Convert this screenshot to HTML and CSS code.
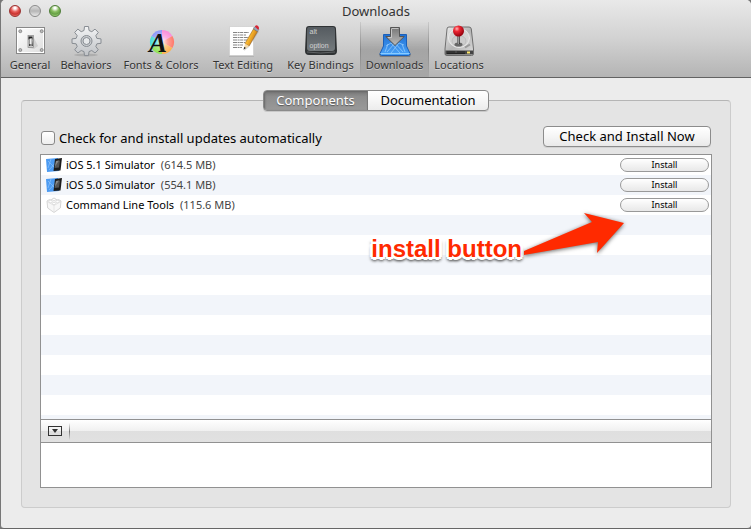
FILE: index.html
```html
<!DOCTYPE html>
<html lang="en">
<head>
<meta charset="utf-8">
<title>Downloads</title>
<link rel="stylesheet" href="styles.css">
</head>
<body>
<div class="window">
  <header class="titlebar">
    <div class="title-row">
      <div class="lights">
        <button class="light red" aria-label="Close"></button>
        <button class="light gray" aria-label="Minimize"></button>
        <button class="light green" aria-label="Zoom"></button>
      </div>
      <h1 class="title">Downloads</h1>
    </div>
    <nav class="toolbar">
      <button class="tool">
        <svg class="icon" viewBox="0 0 32 32">
          <defs>
            <linearGradient id="plate" x1="0" y1="0" x2="1" y2="1"><stop offset="0" stop-color="#fff"/><stop offset="1" stop-color="#ddd"/></linearGradient>
            <linearGradient id="lever" x1="0" x2="1"><stop offset="0" stop-color="#222"/><stop offset=".5" stop-color="#aaa"/><stop offset="1" stop-color="#333"/></linearGradient>
          </defs>
          <rect x="2.500" y="2.500" width="28" height="26" fill="url(#plate)" stroke="#888"/>
          <rect x="3.500" y="3.500" width="26" height="24" fill="none" stroke="#fff"/>
          <g fill="#bbb" stroke="#777" stroke-width=".7"><circle cx="6.300" cy="6.200" r="1.500"/><circle cx="27.700" cy="6.200" r="1.500"/><circle cx="6.300" cy="25" r="1.500"/><circle cx="27.700" cy="25" r="1.500"/></g>
          <path d="M19 11l5 10-4 3-5-1z" fill="#888" opacity=".25"/>
          <rect x="14" y="10.500" width="5.500" height="12" fill="#ccc" stroke="#888" stroke-width=".7"/>
          <path d="M14.500 11.500h4v3h-4z" fill="#222"/><path d="M15 13h3l1 8h-4z" fill="url(#lever)"/><path d="M15.500 14h2v5h-2z" fill="#eee"/>
        </svg>
        <span>General</span>
      </button>
      <button class="tool">
        <svg class="icon" viewBox="0 0 32 32">
          <defs><linearGradient id="metal" x1="0" y1="0" x2="0" y2="1"><stop offset="0" stop-color="#f3f4f5"/><stop offset="1" stop-color="#bfc2c6"/></linearGradient></defs>
          <ellipse cx="16" cy="30" rx="12" ry="1.500" fill="#777" opacity=".3"/>
          <g stroke="#888d93" stroke-width="1" stroke-linejoin="round">
            <path fill="url(#metal)" d="M14 5.500L14.500 1.500h4L19 5.500l2.800 1.200 3.200-2.600 3.300 3.300-2.500 3.300 1.100 2.700 4.100.5v4.400l-4.100.5-1.100 2.700 2.500 3.300-3.300 3.200-3.200-2.500-2.800 1.100-.5 4h-4l-.5-4-2.800-1.100-3.300 2.500-3.200-3.200 2.500-3.300-1.100-2.700-4.100-.5v-4.400l4.100-.5 1.100-2.700-2.500-3.300 3.200-3.300 3.300 2.600z"/>
            <circle cx="16.500" cy="16" r="5.500" fill="#c9ccd0"/><circle cx="16.500" cy="16" r="3.500" fill="#e6e8ea"/>
          </g>
        </svg>
        <span>Behaviors</span>
      </button>
      <button class="tool">
        <span class="icon"><svg viewBox="0 0 32 32">
          <defs><radialGradient id="shine"><stop offset="0" stop-color="#fff" stop-opacity=".9"/><stop offset=".5" stop-color="#fff" stop-opacity=".3"/><stop offset="1" stop-color="#fff" stop-opacity="0"/></radialGradient></defs>
          <g transform="translate(17 17)">
            <path d="M0 0L0-12A12 12 0 0 1 10.400-6z" fill="#fb8cda"/><path d="M0 0L10.400-6A12 12 0 0 1 10.400 6z" fill="#ff796a"/><path d="M0 0L10.400 6A12 12 0 0 1 0 12z" fill="#ffb04c"/><path d="M0 0L0 12A12 12 0 0 1-10.400 6z" fill="#8ee355"/><path d="M0 0L-10.400 6A12 12 0 0 1-10.400-6z" fill="#46dcd8"/><path d="M0 0L-10.400-6A12 12 0 0 1 0-12z" fill="#8b96f8"/>
            <circle r="12" fill="url(#shine)"/>
          </g>
        </svg><b class="letter" aria-hidden="true">A</b></span>
        <span>Fonts &amp; Colors</span>
      </button>
      <button class="tool">
        <svg class="icon" viewBox="0 0 32 32">
          <defs><linearGradient id="pencil" x1="0" y1="0" x2="1" y2=".6"><stop offset="0" stop-color="#ffe28a"/><stop offset=".5" stop-color="#f7b52c"/><stop offset="1" stop-color="#b86412"/></linearGradient></defs>
          <path d="M2 31h25" stroke="#999" stroke-width="1.500" opacity=".5"/>
          <path d="M2.500 1.500h24v29h-24z" fill="#fff" stroke="#ccc" stroke-width=".7"/>
          <path d="M6 7.500h16M6 10h13M6 12.500h15M6 15h14M6 17.500h12M6 20h10M6 22.500h9" stroke="#777" stroke-width=".9" stroke-dasharray="4 .6 2 .5 3 .7"/>
          <path d="M17 26l2-7 9-15 4 2.500-10 15.500z" fill="#777" opacity=".3"/>
          <path d="M18 18.500L26.500 4l4 2.500-8.500 14.500z" fill="url(#pencil)" stroke="#9b6115" stroke-width=".6"/>
          <path d="M18 18.500l4 2.500-5 3.500z" fill="#f5d9a5"/><path d="M17.300 21.800l1.600 1.300-2.400 1.600z" fill="#222"/>
          <path d="M26.500 4L28 1.600l4 2.500-1.500 2.400z" fill="#9ba8b8" stroke="#667" stroke-width=".5"/><path d="M27.800 1.600q2-2.600 4 .3.700 1.500-.7 2.800z" fill="#d92332"/>
        </svg>
        <span>Text Editing</span>
      </button>
      <button class="tool">
        <span class="icon" aria-hidden="true"><svg viewBox="0 0 32 32">
          <defs><linearGradient id="key" x1="0" y1="0" x2="0" y2="1"><stop offset="0" stop-color="#555b60"/><stop offset="1" stop-color="#747a7d"/></linearGradient></defs>
          <path d="M4 1h24q3 0 3 3l1 22q0 4-4 4H4q-4 0-4-4L1 4q0-3 3-3z" fill="#303335"/>
          <path d="M4 2h24q2 0 2 3v18q0 3-3 3H5q-3 0-3-3V5q0-3 2-3z" fill="url(#key)"/><path d="M2 27q13 2 28 0" fill="none" stroke="#75797b" stroke-width=".7"/>
        </svg><i class="key-alt">alt</i><i class="key-option">option</i></span>
        <span>Key Bindings</span>
      </button>
      <button class="tool selected" aria-pressed="true">
        <svg class="icon" viewBox="0 0 32 32">
          <defs>
            <linearGradient id="blue" x1="0" y1="0" x2="0" y2="1"><stop offset="0" stop-color="#1f70d4"/><stop offset="1" stop-color="#4ca5fa"/></linearGradient>
            <linearGradient id="arrowgray" x1="0" y1="0" x2="0" y2="1"><stop offset="0" stop-color="#777"/><stop offset="1" stop-color="#bbb"/></linearGradient>
          </defs>
          <path d="M0 29h32l-1 3H1z" fill="#555" opacity=".5"/>
          <path d="M4.500 9.500h23V21L31 28.500q0 2-1.500 2h-27Q1 30.500 1 28.500L4.500 21z" fill="url(#blue)" stroke="#1c60b9"/>
          <path d="M1.500 28.500h29" stroke="#8acbff"/>
          <path d="M8 27l7-8M24 27l-8-9M7 21l5-3 9 10M25 20l-5-2-8 10M6 27l3-8M26 27l-3-8" fill="none" stroke="#9bd0ff" stroke-width="1" opacity=".7"/>
          <path d="M11.500 2.500h9v9h4.800L16 20.500 6.700 11.500h4.800z" fill="url(#arrowgray)" stroke="#555"/><path d="M12.500 3.500h7M12.500 4v8.500H9" fill="none" stroke="#d3d3d3" stroke-width=".8"/>
        </svg>
        <span>Downloads</span>
      </button>
      <button class="tool">
        <svg class="icon" viewBox="0 0 32 32">
          <defs>
            <linearGradient id="drive" x1="0" y1="0" x2="1" y2="1"><stop offset="0" stop-color="#eee"/><stop offset=".5" stop-color="#b5b5b5"/><stop offset="1" stop-color="#ddd"/></linearGradient>
            <radialGradient id="ball" cx=".35" cy=".3" r=".7"><stop offset="0" stop-color="#ffb7b7"/><stop offset=".35" stop-color="#ef2733"/><stop offset="1" stop-color="#95000d"/></radialGradient>
          </defs>
          <path d="M6 2h20q2 0 2.300 2L30.500 24v5q0 1.500-2 1.500H4q-2 0-2-1.500v-5L4 4q0-2 2-2z" fill="url(#drive)" stroke="#555" stroke-width=".8"/>
          <ellipse cx="16" cy="13" rx="10.500" ry="9.500" fill="#d3d3d3" stroke="#f5f5f5" stroke-width=".7"/><ellipse cx="16" cy="16" rx="7" ry="5.500" fill="#ccc" stroke="#aaa" stroke-width=".5"/>
          <path d="M22 22.500l5-3" stroke="#999" stroke-width="2"/>
          <path d="M2.500 25.500h27.500v4h-27.500z" fill="#444"/><path d="M4 27h8M14 27h8M4 28.500h18" stroke="#222"/><path d="M24 27.500h3" stroke="#ffe86b" stroke-width="2"/>
          <ellipse cx="15.500" cy="19.500" rx="4" ry="2" fill="#666"/><path d="M15.500 9v10" stroke="#333" stroke-width="2.500"/><path d="M15.200 10v9" stroke="#eee" stroke-width=".8"/>
          <circle cx="15.500" cy="6" r="5.500" fill="url(#ball)"/>
        </svg>
        <span>Locations</span>
      </button>
    </nav>
  </header>

  <main class="content">
    <div class="tabs">
      <button class="tab active">Components</button><button class="tab">Documentation</button>
    </div>
    <section class="group">
      <div class="options">
        <label class="check"><input type="checkbox"><span>Check for and install updates automatically</span></label>
        <button class="push">Check and Install Now</button>
      </div>
      <div class="panel">
        <ul class="list">
          <li class="row">
            <svg class="row-icon" viewBox="0 0 16 16"><path d="M0 2l12-1 1 13-12 1z" fill="#4c9bf2"/><path d="M2 4l8 8M5 2l-3 9M3 13l8-9" stroke="#8cc3fb" stroke-width=".7" fill="none"/><path d="M9 2l7-1-1.500 12.500L7.500 14z" fill="#1d1d1d"/><path d="M10 4l4-.5-1 7-4.500.5z" fill="#555"/><path d="M10 4l3-.5-4 6z" fill="#888"/></svg>
            <span class="name">iOS 5.1 Simulator</span><span class="size">(614.5 MB)</span><button class="install">Install</button>
          </li>
          <li class="row">
            <svg class="row-icon" viewBox="0 0 16 16"><path d="M0 2l12-1 1 13-12 1z" fill="#4c9bf2"/><path d="M2 4l8 8M5 2l-3 9M3 13l8-9" stroke="#8cc3fb" stroke-width=".7" fill="none"/><path d="M9 2l7-1-1.500 12.500L7.500 14z" fill="#1d1d1d"/><path d="M10 4l4-.5-1 7-4.500.5z" fill="#555"/><path d="M10 4l3-.5-4 6z" fill="#888"/></svg>
            <span class="name">iOS 5.0 Simulator</span><span class="size">(554.1 MB)</span><button class="install">Install</button>
          </li>
          <li class="row">
            <svg class="row-icon" viewBox="0 0 16 16"><path d="M1 4l2.500-1.500L5 3l3-2 3 2 1.500-.5L15 4l-.7 7L8 15.500 1.700 11z" fill="#f7f7f7" stroke="#ccc" stroke-width=".8"/><path d="M1 4.500l7 4 7-4M8 8.500v6.500" fill="none" stroke="#ddd" stroke-width=".7"/><g fill="#fff" stroke="#ccc" stroke-width=".6"><ellipse cx="4.500" cy="4.500" rx="1.700" ry="1.200"/><ellipse cx="11.500" cy="4.500" rx="1.700" ry="1.200"/><ellipse cx="8" cy="2.500" rx="1.700" ry="1.200"/><ellipse cx="8" cy="6.500" rx="1.700" ry="1.200"/></g></svg>
            <span class="name">Command Line Tools</span><span class="size">(115.6 MB)</span><button class="install">Install</button>
          </li>
        </ul>
        <div class="splitter">
          <button class="disclose" aria-label="Show details"><svg viewBox="0 0 6 4"><path d="M0 0h6L3 4z" fill="#333"/></svg></button>
          <span class="divider"></span>
        </div>
        <div class="details"></div>
        <div class="callout">
          <span class="callout-text">install button</span>
          <svg class="callout-arrow" viewBox="0 0 104 44"><path d="M2 39L70 10 62 1l40 10-27 30 1-11L2 43z" fill="#ff2a00"/></svg>
        </div>
      </div>
    </section>
  </main>
</div>
</body>
</html>
```
FILE: styles.css
```css
* { box-sizing: border-box; }
html, body { height: 100%; }
body { margin: 0; background: #777; font-family: "Noto Sans", "Open Sans", sans-serif; font-size: 13px; color: #000; }
button { margin: 0; padding: 0; border: 0; background: none; font: inherit; color: inherit; white-space: nowrap; }
.window { display: flex; flex-direction: column; min-height: 100vh; background: #ececec; border-left: 1px solid #777; border-bottom: 1px solid #666; border-radius: 5px 5px 4px 4px; overflow: hidden; }

.titlebar { height: 78px; padding-left: 4px; background: linear-gradient(#e9e9e9, #d2d2d2 50%, #b4b4b4); border-bottom: 1px solid #626262; }
.title-row { display: grid; grid-template-columns: 1fr auto 1fr; align-items: center; height: 22px; padding-right: 4px; }
.lights { display: flex; gap: 8px; padding-left: 4px; }
.light { width: 12px; height: 12px; border-radius: 50%; border: 1px solid #777; }
.red { background: radial-gradient(circle at 50% 20%, #fff 0 10%, #e9635f 40%, #c9322f 65%, #ff9c8e); border-color: #99302f; }
.gray { background: linear-gradient(#ddd, #b6b6b6 50%, #e8e8e8); border-color: #8b8b8b; }
.green { background: radial-gradient(circle at 50% 20%, #fff 0 10%, #8bbf64 40%, #65a044 65%, #c9f59f); border-color: #4c7c35; }
.title { margin: 0; font-size: 13px; font-weight: 400; line-height: 20px; color: #333; }
.toolbar { display: grid; grid-template-columns: 50px 62px 88px 76px 79px 69px 60px; height: 55px; }
.tool { display: flex; flex-direction: column; align-items: center; padding-top: 3px; font-size: 11px; line-height: 16px; color: #333; text-shadow: 0 1px 0 rgba(255,255,255,.4); }
.tool.selected { border: 1px solid; border-width: 0 1px; border-image: linear-gradient(#ccc, #888 50%, #aaa) 1; background: linear-gradient(rgba(0,0,0,0), rgba(0,0,0,.18) 50%, rgba(0,0,0,.08)); }
.icon { display: block; position: relative; width: 32px; height: 32px; overflow: visible; }
.icon svg { display: block; width: 32px; height: 32px; }
.letter { position: absolute; left: 4px; top: 5px; font: italic bold 27px/26px "Liberation Serif", serif; color: #111; text-shadow: none; }
.key-alt, .key-option { position: absolute; left: 5px; font: 7px/8px "Liberation Sans", sans-serif; color: #d2d2d2; text-shadow: none; }
.key-alt { top: 3px; }
.key-option { top: 17px; }

.content { flex: 1; display: flex; flex-direction: column; padding: 12px 20px 20px; }
.tabs { position: relative; z-index: 1; align-self: center; display: flex; height: 21px; margin-bottom: -11px; border: 1px solid #8a8a8a; border-radius: 4px; box-shadow: 0 1px 0 rgba(0,0,0,.12); overflow: hidden; background: linear-gradient(#fff, #f6f6f6 50%, #ececec); }
.tab { width: 120px; line-height: 19px; }
.tab.active { width: 104px; color: #fff; background: linear-gradient(#777, #8d8d8d 30%, #999); border-right: 1px solid #777; box-shadow: inset 1px 1px 2px #666; text-shadow: 0 1px 1px #555; }
.group { flex: 1; display: flex; flex-direction: column; padding: 25px 18px 19px; background: #e4e4e4; border: 1px solid #ccc; border-top-color: #b5b5b5; border-radius: 4px; }
.options { display: flex; justify-content: space-between; align-items: center; height: 21px; margin-bottom: 7px; padding-right: 1px; }
.check { display: flex; align-items: center; gap: 4px; padding-top: 3px; }
.check input { appearance: none; width: 14px; height: 14px; margin: 0 0 0 1px; border: 1px solid #888; border-radius: 3px; background: linear-gradient(#fff, #eee); }
.push { width: 168px; height: 21px; border: 1px solid #8c8c8c; border-radius: 4px; background: linear-gradient(#fff, #f5f5f5 50%, #e9e9e9); line-height: 19px; box-shadow: 0 1px 0 rgba(0,0,0,.08); }

.panel { position: relative; flex: 1; display: flex; flex-direction: column; background: #fff; border: 1px solid #919191; }
.list { flex: 1; margin: 0; padding: 0; list-style: none; background: repeating-linear-gradient(#fff 0 20px, #f2f5fa 20px 40px); }
.row { display: flex; align-items: center; height: 20px; padding: 0 2px 0 5px; font-size: 11px; line-height: 20px; }
.row-icon { width: 16px; height: 16px; margin-right: 4px; }
.size { margin-left: 6px; color: #444; }
.install { width: 89px; height: 14px; margin-left: auto; border: 1px solid #999; border-radius: 7px; background: linear-gradient(#fff, #f3f3f3 50%, #e8e8e8); font-size: 9px; line-height: 12px; }
.splitter { display: flex; align-items: center; height: 24px; padding-left: 7px; border: 1px solid #919191; border-width: 1px 0; background: linear-gradient(#fff, #f0f0f0 50%, #dfdfdf 50%, #e1e1e1); }
.disclose { display: grid; place-items: center; width: 14px; height: 10px; border: 1px solid #333; }
.disclose svg { width: 6px; height: 4px; }
.divider { width: 1px; height: 17px; margin-left: 7px; background: linear-gradient(transparent, #777 50%, transparent); }
.details { height: 44px; }

.callout { position: absolute; top: 57px; right: 85px; display: flex; pointer-events: none; }
.callout-text { padding-top: 22px; font: bold 24px/30px "Liberation Sans", sans-serif; color: #ff2a00; white-space: nowrap;
  text-shadow: -2px -2px 0 #fff, 2px -2px 0 #fff, -2px 2px 0 #fff, 2px 2px 0 #fff, 0 -3px 0 #fff, 0 3px 0 #fff, -3px 0 0 #fff, 3px 0 0 #fff, 0 4px 3px #555, 2px 3px 3px #777, -2px 3px 3px #777; }
.callout-arrow { width: 104px; height: 44px; overflow: visible; filter: drop-shadow(0 1px 2px rgba(0,0,0,.6)); }
```
